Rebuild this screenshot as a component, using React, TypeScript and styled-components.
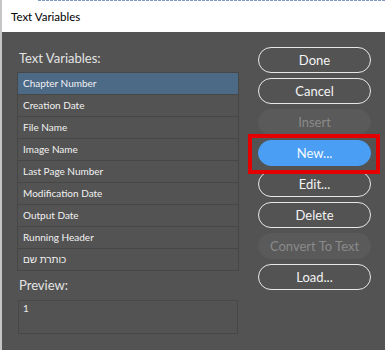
import React from "react";
import styled, { createGlobalStyle, css } from "styled-components";

const GlobalStyle = createGlobalStyle`
  html, body {
    margin: 0;
    padding: 0;
    background: #535353;
  }
  body {
    font-family: Lato, "Liberation Sans", sans-serif;
  }
`;

const Window = styled.div`
  width: 385px;
  height: 350px;
  box-sizing: border-box;
  border-left: 2px solid #c6c6c6;
  display: flex;
  flex-direction: column;
  background: #535353;
  overflow: hidden;
`;

const TopEdge = styled.div`
  flex: none;
  height: 1px;
  background: linear-gradient(to right, #ffffff 35px, transparent 35px),
    repeating-linear-gradient(90deg, #7f97c3 0 3px, #ffffff 3px 4px);
`;

const TitleBar = styled.div`
  flex: none;
  height: 31px;
  background: #ffffff;
  display: flex;
  align-items: center;
  padding-left: 9px;
  font-size: 11.5px;
  color: #000000;
`;

const Body = styled.div`
  flex: 1;
  display: flex;
  align-items: flex-start;
  padding: 15px 0 0 15px;
`;

const LeftColumn = styled.div`
  width: 222px;
  display: flex;
  flex-direction: column;
`;

const SectionLabel = styled.div<{ $top: number }>`
  height: 20px;
  line-height: 20px;
  margin-top: ${(p) => p.$top}px;
  padding-left: 2px;
  font-size: 13px;
  color: #e4e4e4;
`;

const VariableList = styled.div`
  margin-top: 4px;
  border: 1px solid #474747;
  display: flex;
  flex-direction: column;
`;

const VariableRow = styled.div<{ $selected?: boolean }>`
  height: 21px;
  line-height: 21px;
  border-bottom: 1px solid #474747;
  padding-left: 5px;
  font-size: 10px;
  color: #f2f2f2;
  background: ${(p) => (p.$selected ? "#4c6986" : "transparent")};
  white-space: nowrap;
  &:last-child {
    border-bottom: none;
  }
`;

const PreviewBox = styled.div`
  margin: 5px 0 0 1px;
  width: 220px;
  height: 34px;
  box-sizing: border-box;
  border: 1px solid #484848;
  padding-left: 4px;
  font-size: 10px;
  line-height: 14px;
  color: #e8e8e8;
`;

const ButtonColumn = styled.div`
  margin-left: 19px;
  width: 113px;
  display: flex;
  flex-direction: column;
  gap: 5px;
`;

type Variant = "outline" | "primary" | "disabled";

const DialogButton = styled.div<{ $variant: Variant }>`
  height: 26px;
  box-sizing: border-box;
  border-radius: 13px;
  display: flex;
  align-items: center;
  justify-content: center;
  font-size: 13px;
  white-space: nowrap;
  ${(p) =>
    p.$variant === "outline"
      ? css`
          border: 1.5px solid #e8e8e8;
          color: #f4f4f4;
          background: transparent;
        `
      : p.$variant === "primary"
      ? css`
          border: 1.5px solid #4a9ef3;
          color: #f6f9ff;
          background: #4a9ef3;
        `
      : css`
          border: 1.5px solid #5a5a5a;
          color: #8a8a8a;
          background: #5a5a5a;
        `}
`;

const Highlight = styled.div`
  position: relative;
  z-index: 1;
  &::after {
    content: "";
    position: absolute;
    left: -10px;
    right: -9px;
    top: -6px;
    bottom: -8px;
    border: 4px solid #e50000;
    pointer-events: none;
  }
`;

const variables = [
  "Chapter Number",
  "Creation Date",
  "File Name",
  "Image Name",
  "Last Page Number",
  "Modification Date",
  "Output Date",
  "Running Header",
  "כותרת שם",
];

const buttons: { label: string; variant: Variant; highlight?: boolean }[] = [
  { label: "Done", variant: "outline" },
  { label: "Cancel", variant: "outline" },
  { label: "Insert", variant: "disabled" },
  { label: "New...", variant: "primary", highlight: true },
  { label: "Edit...", variant: "outline" },
  { label: "Delete", variant: "outline" },
  { label: "Convert To Text", variant: "disabled" },
  { label: "Load...", variant: "outline" },
];

export default function App() {
  return (
    <>
      <GlobalStyle />
      <Window>
        <TopEdge />
        <TitleBar>Text Variables</TitleBar>
        <Body>
          <LeftColumn>
            <SectionLabel $top={1}>Text Variables:</SectionLabel>
            <VariableList>
              {variables.map((v, i) => (
                <VariableRow key={v} $selected={i === 0}>
                  {v}
                </VariableRow>
              ))}
            </VariableList>
            <SectionLabel $top={4}>Preview:</SectionLabel>
            <PreviewBox>1</PreviewBox>
          </LeftColumn>
          <ButtonColumn>
            {buttons.map((b) =>
              b.highlight ? (
                <Highlight key={b.label}>
                  <DialogButton $variant={b.variant}>{b.label}</DialogButton>
                </Highlight>
              ) : (
                <DialogButton key={b.label} $variant={b.variant}>
                  {b.label}
                </DialogButton>
              )
            )}
          </ButtonColumn>
        </Body>
      </Window>
    </>
  );
}
